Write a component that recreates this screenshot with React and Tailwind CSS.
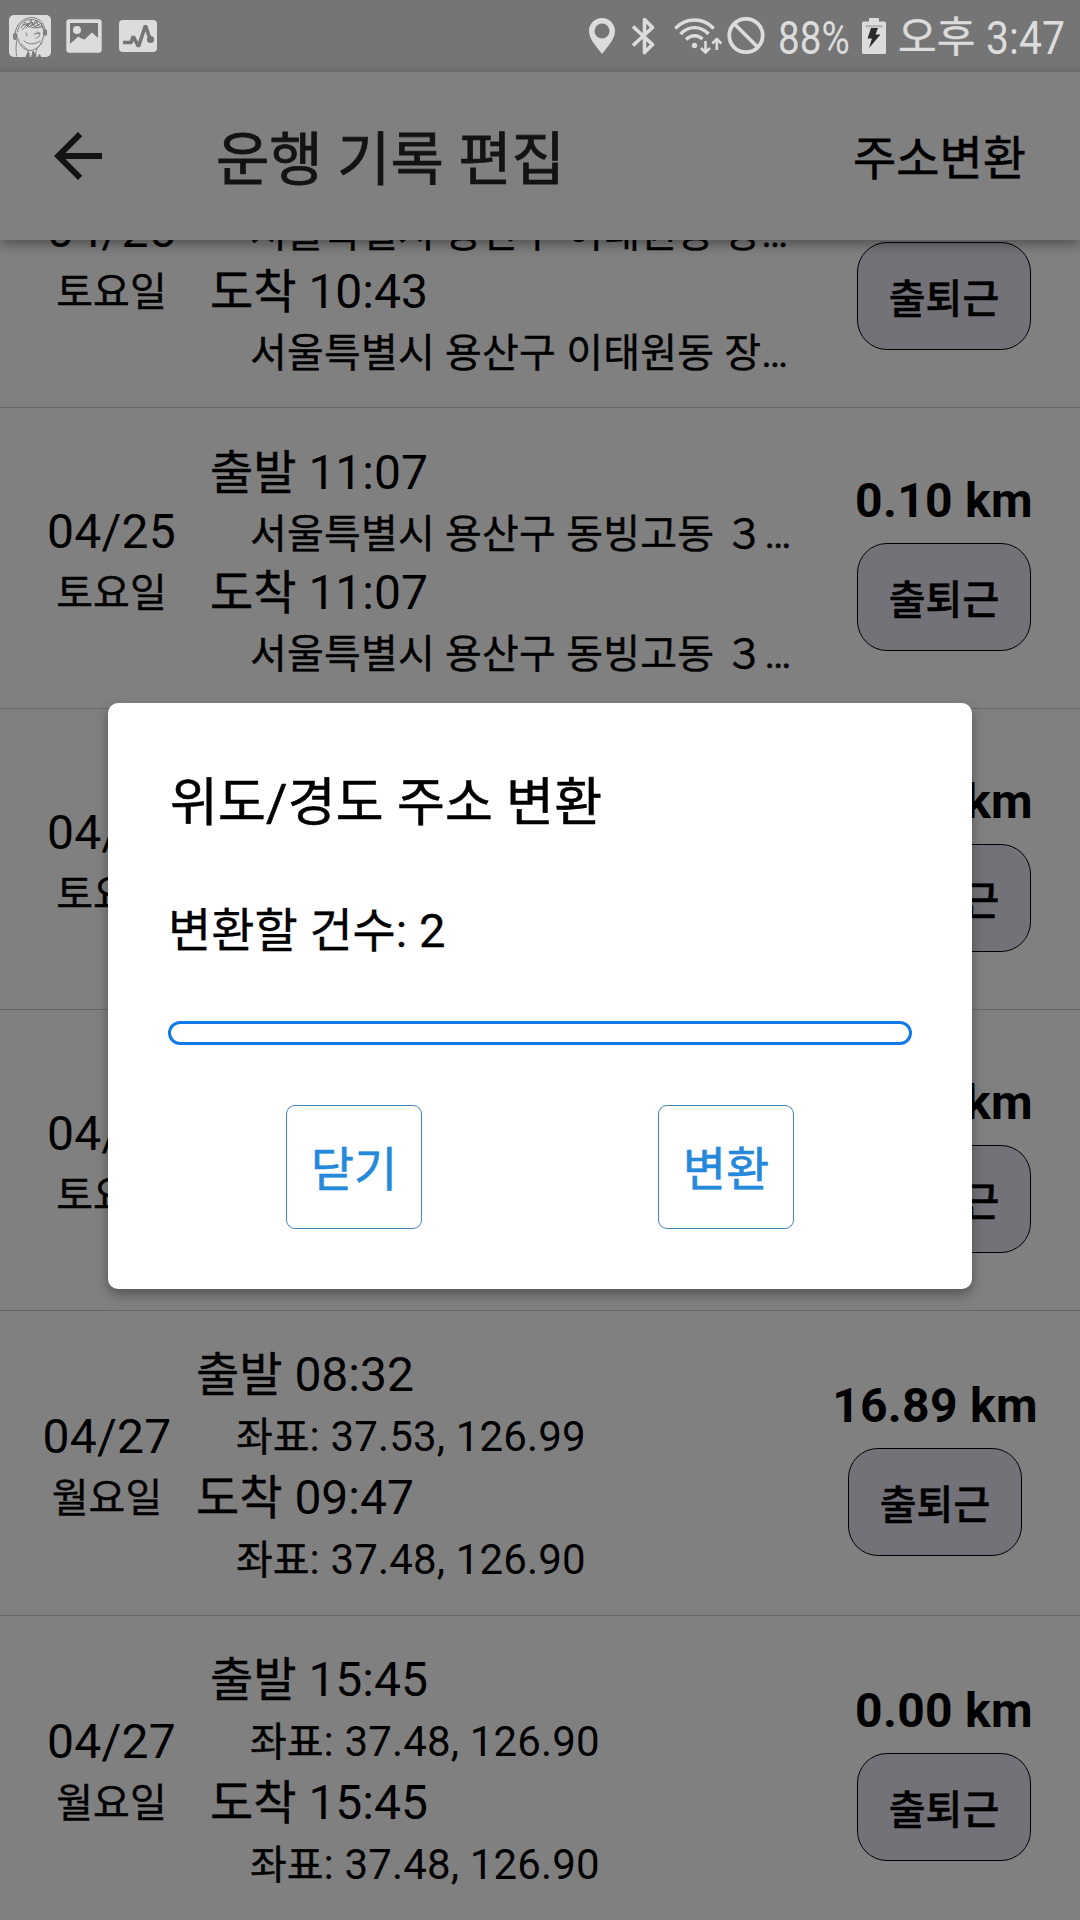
const NBSP = "\u00a0";

const RECORDS = [
  {
    date: "04/25",
    day: "토요일",
    scrolled: true,
    end: "10:43",
    from: "서울특별시 용산구 이태원동 장…",
    to: "서울특별시 용산구 이태원동 장…",
    km: NBSP,
  },
  {
    date: "04/25",
    day: "토요일",
    start: "11:07",
    end: "11:07",
    from: "서울특별시 용산구 동빙고동 ３…",
    to: "서울특별시 용산구 동빙고동 ３…",
    km: "0.10 km",
  },
  { date: "04/25", day: "토요일", km: "0.00 km" },
  { date: "04/25", day: "토요일", km: "0.00 km" },
  {
    date: "04/27",
    day: "월요일",
    start: "08:32",
    end: "09:47",
    from: "37.53, 126.99",
    to: "37.48, 126.90",
    coords: true,
    wide: true,
    km: "16.89 km",
  },
  {
    date: "04/27",
    day: "월요일",
    start: "15:45",
    end: "15:45",
    from: "37.48, 126.90",
    to: "37.48, 126.90",
    coords: true,
    km: "0.00 km",
  },
];

function FaceIcon() {
  return (
    <svg className="h-[42px] w-[42px]" viewBox="0 0 42 42" fill="none" stroke="#757575" strokeWidth="0.9" strokeLinecap="round">
      <rect width="42" height="42" rx="5" fill="#dcdcdc" stroke="none" />
      <path d="M6 19C7 9 14 3 22 2.500C30 2.500 35.500 8 36 15" />
      <path d="M8.500 17C9 10 14 5 21 4.500C28 4 33 8 34.500 14" />
      <path d="M12 13L16 7L19 11L22 5L24 10L27 5L29 11L32 8L34 14M14 10L21 8L26 12L31 9M17 13L23 7L28 13L33 11M13 15L19 9M20 12L30 6M16 10L25 13L32 12" />
      <path d="M9.500 24C10 31 15 35 21 35.500C28 35 33 30 34.500 21" />
      <path d="M15 26C19 29.500 26 30 31 26M17 18L18 21M25 19L31 18M28 17C32 18 32 22 27 23" />
      <rect x="4.500" y="18.500" width="3.500" height="6" rx="1.300" fill="#858585" />
      <rect x="34.500" y="14.500" width="3" height="6" rx="1.300" fill="#858585" />
      <path d="M8 25C6.500 31 7 36 7.500 41M12 29C17 33 21 36 20 41M33 28C28 33 26 35 27 41" />
      <path d="M17 42L19 37L20.500 42M22.500 42L24 36L26 39L27 42M29 42L30.500 39.500L32 42" fill="#757575" />
    </svg>
  );
}

function PhotoIcon() {
  return (
    <svg className="ml-[15px] h-[34px] w-9" viewBox="0 0 36 34">
      <rect x="0.300" y="0.300" width="35.400" height="33.400" rx="3" fill="#dcdcdc" />
      <path d="M4 4H32V19.500L26 14L19 21L12.500 18L4 25Z" fill="#757575" />
      <path d="M4 25L12.500 17.500L17 22L26 13.500L32 19V29H4Z" fill="#dcdcdc" />
      <circle cx="11" cy="11" r="4" fill="#dcdcdc" />
    </svg>
  );
}

function ActivityIcon() {
  return (
    <svg className="ml-[17px] h-8 w-[38px]" viewBox="0 0 38 32">
      <rect width="38" height="32" rx="4" fill="#dcdcdc" />
      <path d="M4 22.500H12L14.300 16.500L19.500 26.500L26.500 5.500L31 19" fill="none" stroke="#757575" strokeWidth="3.600" strokeLinejoin="bevel" />
      <circle cx="31.500" cy="19.500" r="3.600" fill="#757575" />
    </svg>
  );
}

function PinIcon() {
  return (
    <svg className="h-9 w-[26px]" viewBox="0 0 26 36">
      <path fillRule="evenodd" d="M13 0C5.800 0 0 5.700 0 13C0 21 7 28 13 36C19 28 26 21 26 13C26 5.700 20.200 0 13 0ZM13 5.500A7.500 7.500 0 1 1 13 20.500A7.500 7.500 0 1 1 13 5.500Z" fill="#dcdcdc" />
    </svg>
  );
}

function BluetoothIcon() {
  return (
    <svg className="ml-[17px] h-[38px] w-[23px]" viewBox="0 0 23 38" fill="none" stroke="#dcdcdc" strokeWidth="3.600">
      <path d="M1 9.500L20.500 27.500L12.500 35.500V2.500L20.500 10.500L1 28.500" strokeLinejoin="round" />
    </svg>
  );
}

function WifiIcon() {
  return (
    <svg className="ml-[19px] h-[37px] w-12" viewBox="0 0 48 37" fill="none" stroke="#dcdcdc" strokeWidth="3.400">
      <path d="M1.200 10.500C12 -0.800 29 -0.800 39.800 10.500" />
      <path d="M6.500 16C14.500 7.500 26.500 7.500 34.500 16" />
      <path d="M12 21.500C17 16.500 24 16.500 28.500 21" />
      <circle cx="20.500" cy="27.500" r="2.700" fill="#dcdcdc" stroke="none" />
      <path d="M31.500 23V34M27 30L31.500 34.500L36 30M42.800 32V21M38.300 25.500L42.800 21L47.300 25.500" strokeWidth="2.600" />
    </svg>
  );
}

function BanIcon() {
  return (
    <svg className="ml-[5px] h-[38px] w-[38px]" viewBox="0 0 38 38" fill="none" stroke="#dcdcdc" strokeWidth="3.800">
      <circle cx="19" cy="18.500" r="16.700" />
      <path d="M7.500 7L30.500 30" />
    </svg>
  );
}

function BatteryIcon() {
  return (
    <svg className="ml-[13px] h-9 w-6" viewBox="0 0 24 36">
      <path d="M7 0H17V3.500H22.500Q24 3.500 24 5V34.500Q24 36 22.500 36H1.500Q0 36 0 34.500V5Q0 3.500 1.500 3.500H7Z" fill="#dcdcdc" />
      <path d="M3.500 7H20.500V9.500H3.500Z" fill="#b4b4b4" />
      <path d="M9 10H16L13.500 16.500H18.500L7 30L10 20.500H5.500Z" fill="#2a2a2a" />
    </svg>
  );
}

function StatusBar() {
  return (
    <div className="flex h-[72px] shrink-0 items-center bg-[#757575] text-[#dcdcdc]">
      <div className="flex items-center pl-[9px]">
        <FaceIcon />
        <PhotoIcon />
        <ActivityIcon />
      </div>
      <div className="ml-auto flex items-center whitespace-nowrap">
        <PinIcon />
        <BluetoothIcon />
        <WifiIcon />
        <BanIcon />
        <span className="ml-[13px] block w-[71px] pt-[3px] text-[46px] leading-[60px]">
          <span className="block origin-left scale-x-[0.84]">88%</span>
        </span>
        <BatteryIcon />
        <span className="ml-3 w-[88px] pt-[3px] text-[42px] leading-[60px] [-webkit-text-stroke:0.4px]">오후</span>
        <span className="block w-[94px] pt-[3px] text-[46px] leading-[60px]">
          <span className="block origin-left scale-x-[0.89]">3:47</span>
        </span>
      </div>
    </div>
  );
}

function Header() {
  return (
    <header className="relative z-10 flex h-[168px] shrink-0 items-center bg-[#808080] shadow-[0_4px_12px_rgba(0,0,0,0.4)]">
      <svg className="ml-[42px] size-[72px]" viewBox="0 0 24 24" fill="#131313">
        <path d="M20 11H7.830l5.590-5.590L12 4l-8 8 8 8 1.410-1.410L7.830 13H20v-2z" />
      </svg>
      <h1 className="ml-[102px] pt-[9px] text-[58px] text-[#131313] [-webkit-text-stroke:0.8px]">운행 기록 편집</h1>
      <button className="mr-[54px] ml-auto pt-[7px] text-[47px] [-webkit-text-stroke:0.6px]">주소변환</button>
    </header>
  );
}

function Stop({ label, time, place, coords }) {
  return (
    <>
      <div className="text-[48px] leading-[60px]">
        {time ? (
          <>
            <span className="pl-px text-[47px] [-webkit-text-stroke:0.4px]">{label}</span> {time}
          </>
        ) : (
          NBSP
        )}
      </div>
      {coords ? (
        <div className="pt-[3px] pb-[2px] pl-[41px] text-[40px] leading-[57px]">
          <span className="[-webkit-text-stroke:0.4px]">좌표</span>
          <span className="text-[42px] tracking-[0.15px]">: {place}</span>
        </div>
      ) : (
        <div className="pt-[3px] pl-[41px] text-[40px] leading-[57px] tracking-[0.2px] [-webkit-text-stroke:0.4px]">
          {place}
        </div>
      )}
    </>
  );
}

function Row({ record }) {
  const { date, day, start, end, from, to, coords, wide, km } = record;
  return (
    <li
      className={`flex shrink-0 items-center border-b border-[#666] pt-[9px] whitespace-nowrap ${
        coords ? "h-[305px]" : "h-[301px]"
      }`}
    >
      <div className={`flex flex-col items-center ${wide ? "w-[195px] pl-[19px]" : "w-[209px] pl-[14px]"}`}>
        <span className="text-[48px] leading-[58px] tracking-[0.3px]">{date}</span>
        <span className="pt-[3px] text-[40px] leading-[59px] [-webkit-text-stroke:0.4px]">{day}</span>
      </div>
      <div className="flex-1">
        {end && (
          <>
            <Stop label="출발" time={start} place={from} coords={coords} />
            <Stop label="도착" time={end} place={to} coords={coords} />
          </>
        )}
      </div>
      <div className={`mb-[3px] flex flex-col items-center gap-3 ${wide ? "w-[290px]" : "w-[272px]"}`}>
        <span className="text-[48px] leading-[60px] font-bold tracking-[0.3px]">{km}</span>
        <button className="h-[108px] w-[174px] rounded-[30px] border border-black bg-[#737278] pt-[7px] text-[40px] font-medium [-webkit-text-stroke:0.5px]">
          출퇴근
        </button>
      </div>
    </li>
  );
}

function DialogButton({ children }) {
  return (
    <button className="h-[124px] w-[136px] rounded-[9px] border border-[#3f86bd] pt-[7px] text-[47px] text-[#2489db] [-webkit-text-stroke:0.6px]">
      {children}
    </button>
  );
}

function Dialog() {
  return (
    <div className="absolute inset-0 z-20 flex justify-center pt-[703px]">
      <div
        role="dialog"
        className="flex h-[586px] w-[864px] flex-col rounded-[10px] bg-white px-[60px] shadow-[0_5px_12px_rgba(0,0,0,0.35)]"
      >
        <h2 className="mt-[71px] pl-0.5 text-[52px] leading-[60px] tracking-[0.2px] [-webkit-text-stroke:0.6px]">
          위도/경도 주소 변환
        </h2>
        <p className="mt-[67px] text-[47px] leading-[60px] [-webkit-text-stroke:0.3px]">변환할 건수: 2</p>
        <div className="mt-[60px] h-6 shrink-0 rounded-xl border-[3px] border-[#127ae8]" />
        <div className="mt-[60px] flex justify-around">
          <DialogButton>닫기</DialogButton>
          <DialogButton>변환</DialogButton>
        </div>
      </div>
    </div>
  );
}

export default function App() {
  return (
    <div className="relative flex h-[1920px] w-[1080px] flex-col overflow-hidden bg-[#808080] font-[Roboto,'Noto_Sans_CJK_KR',sans-serif] text-black">
      <StatusBar />
      <Header />
      <main className="flex-1 overflow-hidden">
        <ul className="-mt-[133px] flex flex-col">
          {RECORDS.map((record, i) => (
            <Row key={i} record={record} />
          ))}
        </ul>
      </main>
      <Dialog />
    </div>
  );
}
